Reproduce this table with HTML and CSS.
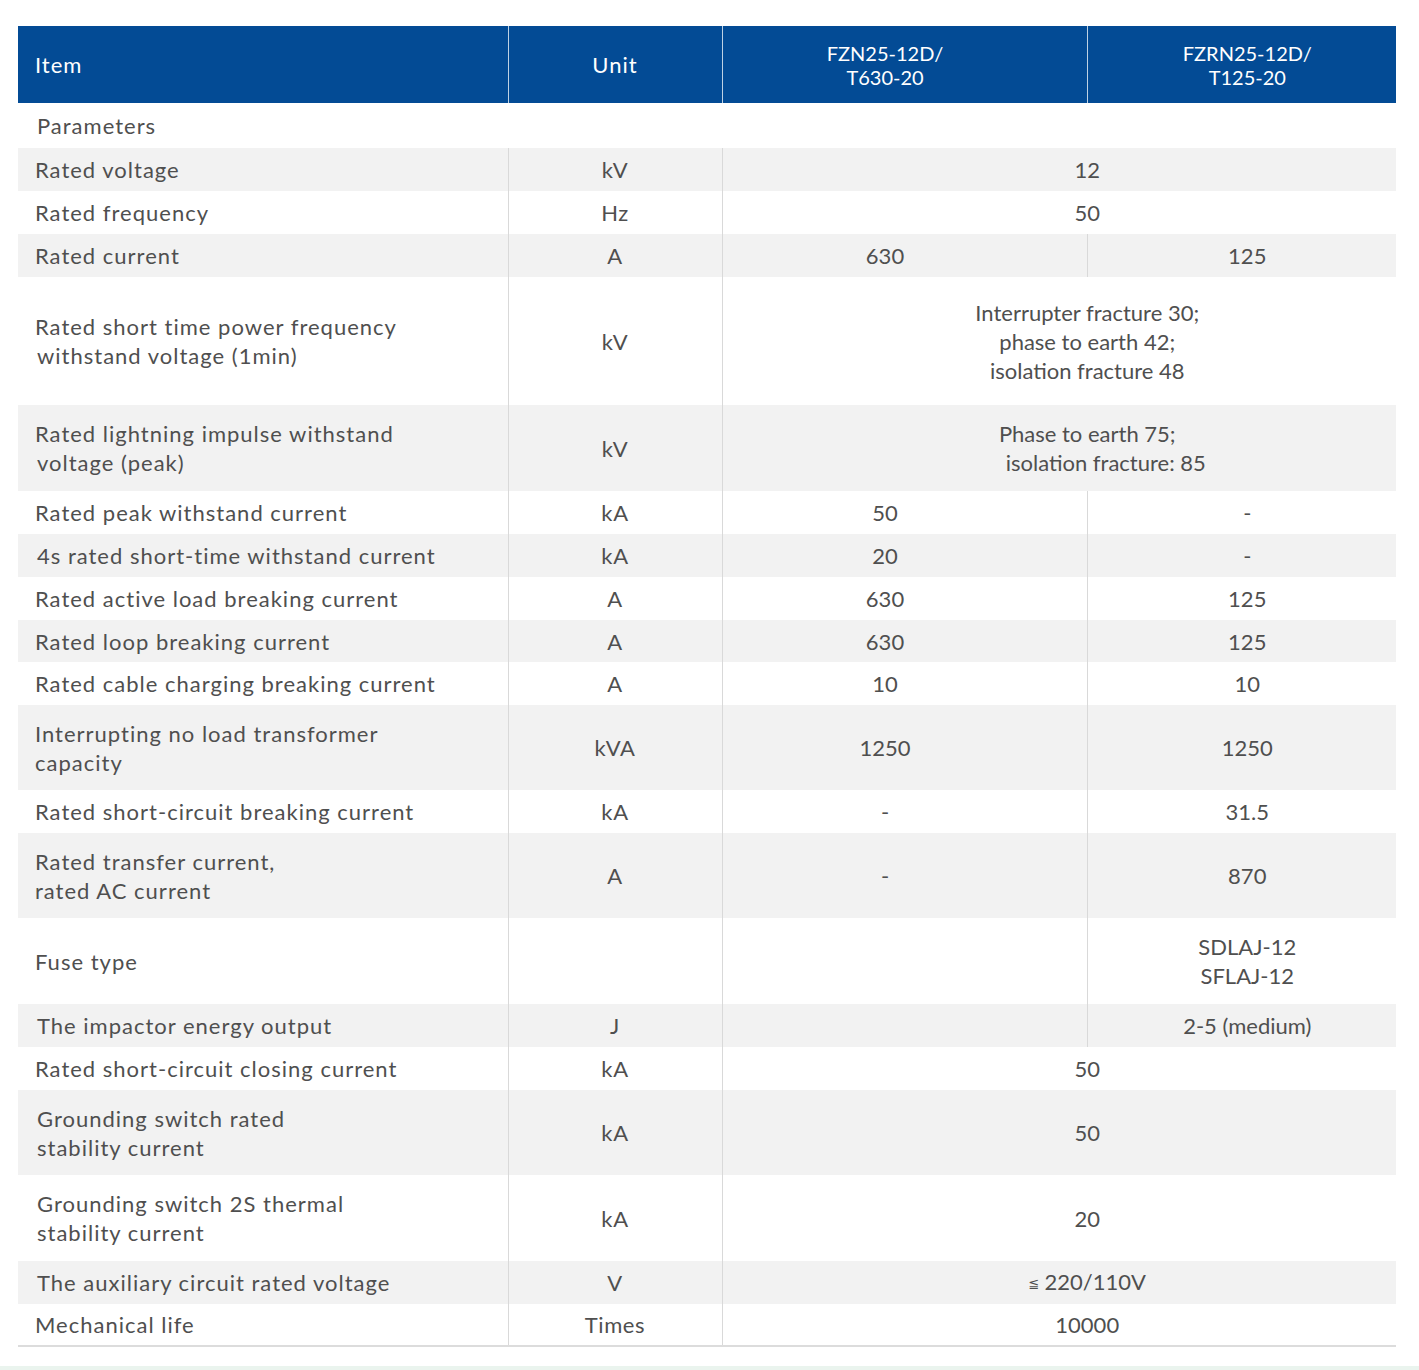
FILE: index.html
```html
<!DOCTYPE html>
<html lang="en">
<head>
<meta charset="utf-8">
<title>Parameters</title>
<link rel="stylesheet" href="styles.css">
</head>
<body>
<div class="page">
  <table class="spec">
    <colgroup>
      <col class="c-item">
      <col class="c-unit">
      <col class="c-a">
      <col class="c-b">
    </colgroup>
    <thead>
      <tr>
        <th class="item big">Item</th>
        <th class="unit big">Unit</th>
        <th class="va">FZN25-12D/<br>T630-20</th>
        <th class="vb">FZRN25-12D/<br>T125-20</th>
      </tr>
    </thead>
    <tbody>
      <tr class="params"><td colspan="4" class="item shift">Parameters</td></tr>
      <tr class="h1 alt"><td class="item">Rated voltage</td><td class="unit">kV</td><td class="vab" colspan="2">12</td></tr>
      <tr class="h1"><td class="item">Rated frequency</td><td class="unit">Hz</td><td class="vab" colspan="2">50</td></tr>
      <tr class="h1 alt"><td class="item">Rated current</td><td class="unit">A</td><td class="va">630</td><td class="vb">125</td></tr>
      <tr class="h3"><td class="item">Rated short time power frequency<br><span class="nudge">withstand voltage (1min)</span></td><td class="unit">kV</td><td class="vab" colspan="2">Interrupter fracture 30;<br>phase to earth 42;<br>isolation fracture 48</td></tr>
      <tr class="h2b alt"><td class="item">Rated lightning impulse withstand<br><span class="nudge">voltage (peak)</span></td><td class="unit">kV</td><td class="vab" colspan="2">Phase to earth 75;<br><span class="indent">isolation fracture: 85</span></td></tr>
      <tr class="h1"><td class="item">Rated peak withstand current</td><td class="unit">kA</td><td class="va">50</td><td class="vb">-</td></tr>
      <tr class="h1 alt"><td class="item shift">4s rated short-time withstand current</td><td class="unit">kA</td><td class="va">20</td><td class="vb">-</td></tr>
      <tr class="h1"><td class="item">Rated active load breaking current</td><td class="unit">A</td><td class="va">630</td><td class="vb">125</td></tr>
      <tr class="h1s alt"><td class="item">Rated loop breaking current</td><td class="unit">A</td><td class="va">630</td><td class="vb">125</td></tr>
      <tr class="h1"><td class="item">Rated cable charging breaking current</td><td class="unit">A</td><td class="va">10</td><td class="vb">10</td></tr>
      <tr class="h2 alt"><td class="item">Interrupting no load transformer<br>capacity</td><td class="unit">kVA</td><td class="va">1250</td><td class="vb">1250</td></tr>
      <tr class="h1"><td class="item">Rated short-circuit breaking current</td><td class="unit">kA</td><td class="va">-</td><td class="vb">31.5</td></tr>
      <tr class="h2 alt"><td class="item">Rated transfer current,<br>rated AC current</td><td class="unit">A</td><td class="va">-</td><td class="vb">870</td></tr>
      <tr class="h2b"><td class="item">Fuse type</td><td class="unit"></td><td class="va"></td><td class="vb">SDLAJ-12<br>SFLAJ-12</td></tr>
      <tr class="h1 alt"><td class="item shift">The impactor energy output</td><td class="unit">J</td><td class="va"></td><td class="vb">2-5 (medium)</td></tr>
      <tr class="h1"><td class="item">Rated short-circuit closing current</td><td class="unit">kA</td><td class="vab" colspan="2">50</td></tr>
      <tr class="h2 alt"><td class="item shift">Grounding switch rated<br>stability current</td><td class="unit">kA</td><td class="vab" colspan="2">50</td></tr>
      <tr class="h2b"><td class="item shift">Grounding switch 2S thermal<br>stability current</td><td class="unit">kA</td><td class="vab" colspan="2">20</td></tr>
      <tr class="h1 alt"><td class="item shift">The auxiliary circuit rated voltage</td><td class="unit">V</td><td class="vab" colspan="2"><span class="sym">≦</span>220/110V</td></tr>
      <tr class="h1s last"><td class="item">Mechanical life</td><td class="unit">Times</td><td class="vab" colspan="2">10000</td></tr>
    </tbody>
  </table>
</div>
<div class="band"></div>
</body>
</html>
```
FILE: styles.css
```css
html, body {
  margin: 0;
  padding: 0;
  background: #ffffff;
}

body {
  font-family: Lato, "Noto Sans", "Liberation Sans", sans-serif;
  color: #4f4f4f;
}

.page {
  padding: 26px 23px 0 18px;
}

.spec {
  width: 1378px;
  border-collapse: collapse;
  table-layout: fixed;
  font-size: 22px;
  line-height: 29px;
  letter-spacing: 1px;
}

.c-item { width: 490px; }
.c-unit { width: 214px; }
.c-a { width: 365px; }
.c-b { width: 309px; }

.spec th,
.spec td {
  padding: 0;
  vertical-align: middle;
  font-weight: 400;
  text-align: center;
}

.spec thead tr {
  height: 77px;
  background: #034b95;
}

.spec th {
  color: #ffffff;
  font-size: 20px;
  line-height: 24px;
  letter-spacing: 0;
  border-left: 1px solid rgba(255, 255, 255, 0.75);
}

.spec th.big {
  font-size: 22px;
  letter-spacing: 1px;
}

.spec th:first-child {
  border-left: none;
}

.spec td {
  border-left: 1px solid #d9d9d9;
}

.spec td:first-child {
  border-left: none;
}

.spec .item {
  text-align: left;
  padding-left: 17px;
}

.spec .item.shift {
  padding-left: 19px;
}

.nudge {
  padding-left: 2px;
}

.spec .unit {
  letter-spacing: 0.6px;
}

.spec .va {
  padding-right: 39px;
  letter-spacing: 0;
}

.spec .vb {
  padding-left: 11px;
  letter-spacing: 0;
}

.spec .vab {
  padding-left: 56px;
  letter-spacing: 0;
}

.indent {
  padding-left: 37px;
}

.sym {
  font-family: "DejaVu Sans", sans-serif;
  font-size: 13px;
  margin-right: 5px;
  vertical-align: 2px;
}

.params {
  height: 45px;
}

.h1 { height: 43px; }
.h1s { height: 42px; }
.h2 { height: 85px; }
.h2b { height: 86px; }
.h3 { height: 128px; }

.alt {
  background: #f2f2f2;
}

.last td {
  border-bottom: 2px solid #dcdcdc;
}

.band {
  margin-top: 19px;
  height: 10px;
  background: #eaf4ee;
}
```
